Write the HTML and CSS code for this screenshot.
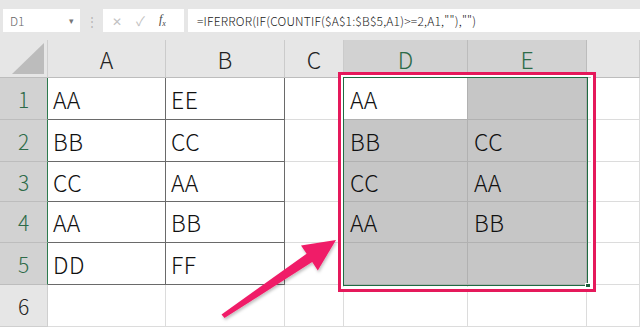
FILE: index.html
```html
<!DOCTYPE html>
<html lang="ja">

<head>
    <meta charset="UTF-8">
    <title>COUNTIF 重複</title>
    <link rel="stylesheet" href="styles.css">
</head>

<body>
    <div class="toolbar">
        <div class="namebox"><span>D1</span><span class="caret">▾</span></div>
        <div class="grip">⋮</div>
        <div class="fxbox">
            <span class="cancel">✕</span>
            <span class="enter">✓</span>
            <span class="fx">f<sub>x</sub></span>
        </div>
        <div class="formula">=IFERROR(IF(COUNTIF($A$1:$B$5,A1)&gt;=2,A1,""),"")</div>
    </div>

    <div class="sheet">
        <div class="grid">
            <div class="corner"><div class="tri"></div></div>
            <div class="col-head">A</div>
            <div class="col-head">B</div>
            <div class="col-head">C</div>
            <div class="col-head sel">D</div>
            <div class="col-head sel">E</div>
            <div class="col-head"></div>

            <div class="row-head sel">1</div>
            <div class="cell data">AA</div>
            <div class="cell data">EE</div>
            <div class="cell"></div>
            <div class="cell pick active">AA</div>
            <div class="cell pick"></div>
            <div class="cell"></div>

            <div class="row-head sel">2</div>
            <div class="cell data">BB</div>
            <div class="cell data">CC</div>
            <div class="cell"></div>
            <div class="cell pick">BB</div>
            <div class="cell pick">CC</div>
            <div class="cell"></div>

            <div class="row-head sel">3</div>
            <div class="cell data">CC</div>
            <div class="cell data">AA</div>
            <div class="cell"></div>
            <div class="cell pick">CC</div>
            <div class="cell pick">AA</div>
            <div class="cell"></div>

            <div class="row-head sel">4</div>
            <div class="cell data">AA</div>
            <div class="cell data">BB</div>
            <div class="cell"></div>
            <div class="cell pick">AA</div>
            <div class="cell pick">BB</div>
            <div class="cell"></div>

            <div class="row-head sel">5</div>
            <div class="cell data">DD</div>
            <div class="cell data">FF</div>
            <div class="cell"></div>
            <div class="cell pick"></div>
            <div class="cell pick"></div>
            <div class="cell"></div>

            <div class="row-head">6</div>
            <div class="cell"></div>
            <div class="cell"></div>
            <div class="cell"></div>
            <div class="cell"></div>
            <div class="cell"></div>
            <div class="cell"></div>
        </div>

        <!-- selection outline and the red marker box -->
        <div class="selection"><div class="handle"></div></div>
        <div class="marker"></div>
    </div>

    <svg class="arrow" width="640" height="327" viewBox="0 0 640 327">
        <defs>
            <filter id="shadow" x="-10%" y="-10%" width="130%" height="130%">
                <feDropShadow dx="1" dy="2" stdDeviation="1.5" flood-color="#000" flood-opacity="0.25" />
            </filter>
        </defs>
        <polygon filter="url(#shadow)" fill="#f01f68"
            points="221.5,314.5 306.6,253.7 301,245.4 336,240 317.8,270.4 312.2,262.1 224.5,318" />
    </svg>
</body>

</html>
```

FILE: styles.css
```css
* {
    margin: 0;
    padding: 0;
    box-sizing: border-box;
}

body {
    width: 640px;
    height: 327px;
    overflow: hidden;
    position: relative;
    background: #fff;
    font-family: 'Noto Sans CJK JP', 'Noto Sans', sans-serif;
    color: #222;
}

/* formula bar */
.toolbar {
    height: 40px;
    background: #e6e6e6;
    display: flex;
    align-items: flex-start;
    padding: 9px 0 0 3px;
}

.namebox {
    width: 77px;
    height: 23px;
    background: #fff;
    display: flex;
    align-items: center;
    justify-content: space-between;
    padding: 0 6px 0 7px;
    font-size: 12px;
    font-weight: 300;
    color: #666;
}

.caret {
    font-size: 9px;
    color: #777;
}

.grip {
    width: 23px;
    height: 23px;
    display: flex;
    align-items: center;
    justify-content: center;
    font-size: 12px;
    color: #b5b5b5;
}

.fxbox {
    width: 81px;
    height: 23px;
    background: #fff;
    display: flex;
    align-items: center;
    padding-left: 9px;
    gap: 14px;
    font-size: 12px;
    color: #c2c2c2;
}

.fxbox .enter {
    font-size: 13px;
}

.fxbox .fx {
    font-family: 'Liberation Serif', serif;
    font-style: italic;
    color: #444;
    font-size: 12px;
}

.fxbox .fx sub {
    font-size: 8px;
}

.formula {
    flex: 1;
    height: 23px;
    margin-left: 4px;
    background: #fff;
    display: flex;
    align-items: center;
    padding-left: 9px;
    font-size: 12px;
    font-weight: 300;
    letter-spacing: 0.2px;
    color: #222;
    white-space: nowrap;
}

/* sheet */
.sheet {
    position: relative;
}

.grid {
    display: grid;
    grid-template-columns: 48px 118px 119px 59px 124px 119px 1fr;
    grid-template-rows: 38px 42px 42px 40px 41px 42px 42px;
}

.corner {
    background: #e6e6e6;
    border-right: 1px solid #cfcfcf;
    border-bottom: 1px solid #bdbdbd;
    display: flex;
    justify-content: flex-end;
    align-items: flex-end;
    padding: 0 3px 3px 0;
}

.tri {
    width: 32px;
    height: 31px;
    background: #bcbcbc;
    clip-path: polygon(100% 0, 100% 100%, 0 100%);
}

.col-head {
    background: #e6e6e6;
    border-right: 1px solid #cbcbcb;
    border-bottom: 1px solid #bdbdbd;
    display: flex;
    align-items: center;
    justify-content: center;
    font-size: 23px;
    font-weight: 300;
    color: #222;
}

.col-head.sel {
    background: #d2d2d2;
    color: #2d6b48;
    border-right-color: #bcbcbc;
}

.row-head {
    background: #e6e6e6;
    border-right: 1px solid #cfcfcf;
    border-bottom: 1px solid #cfcfcf;
    display: flex;
    align-items: center;
    justify-content: center;
    font-size: 21px;
    font-weight: 300;
    color: #222;
}

.row-head.sel {
    background: #d2d2d2;
    color: #2d6b48;
    border-right-color: #2d7a4e;
    border-bottom-color: #bdbdbd;
}

.cell {
    border-right: 1px solid #dcdcdc;
    border-bottom: 1px solid #dcdcdc;
    display: flex;
    align-items: center;
    padding-left: 5px;
    font-size: 23px;
    font-weight: 300;
    letter-spacing: 0.5px;
    color: #111;
}

.cell.data {
    border-color: #6a6a6a;
}

.cell.pick {
    background: #c6c6c6;
    border-color: #b1b1b1;
    padding-left: 6px;
}

.cell.pick.active {
    background: #fff;
}

.selection {
    position: absolute;
    left: 343px;
    top: 37px;
    width: 245px;
    height: 209px;
    border: 1px solid #1f6b42;
}

.handle {
    position: absolute;
    right: -4px;
    bottom: -4px;
    width: 6px;
    height: 6px;
    background: #1f5c3b;
    border: 1px solid #fff;
}

.marker {
    position: absolute;
    left: 338px;
    top: 32px;
    width: 258px;
    height: 220px;
    border: 3px solid #e5195b;
    box-shadow: inset 0 0 0 2px #fff;
}

.arrow {
    position: absolute;
    left: 0;
    top: 0;
}
```
